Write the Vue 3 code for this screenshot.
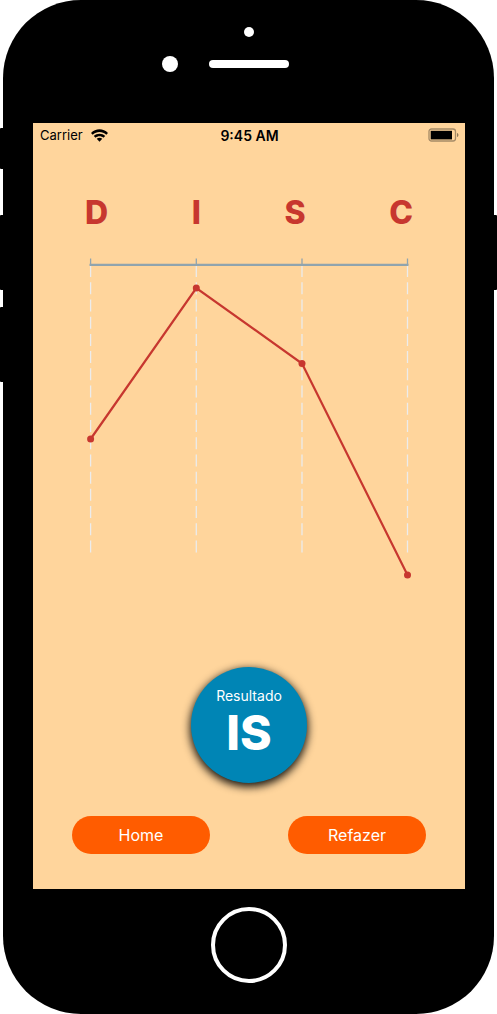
<script setup>
const title = 'IS'
const axisY = 15
const plotBottom = 303

const factors = [
  { letter: 'D', x: 57.6, y: 189 },
  { letter: 'I', x: 163.3, y: 38 },
  { letter: 'S', x: 269, y: 113.5 },
  { letter: 'C', x: 374.5, y: 325 },
]

const line = factors.map((f) => `${f.x},${f.y}`).join(' ')
</script>

<template>
  <div class="phone">
    <span class="side mute"></span>
    <span class="side volume-up"></span>
    <span class="side volume-down"></span>
    <span class="side power"></span>

    <div class="bezel">
      <span class="sensor"></span>
      <div class="ear-row">
        <span class="camera"></span>
        <span class="speaker"></span>
      </div>
    </div>

    <main class="screen">
      <header class="status">
        <div class="carrier">
          <span>Carrier</span>
          <svg class="wifi" viewBox="0 0 16 12" aria-hidden="true">
            <path d="M0 3.6C4.4-0.9 11.6-0.9 16 3.6L14.4 5.3C10.7 1.9 5.3 1.9 1.6 5.3Z" />
            <path d="M2.6 6.5C5.6 3.5 10.4 3.5 13.4 6.5L11.7 8.1C9.6 6.2 6.4 6.2 4.3 8.1Z" />
            <path d="M5.4 9.1C6.9 7.8 9.1 7.8 10.6 9.1L8 11.8Z" />
          </svg>
        </div>
        <time class="time">9:45 AM</time>
        <svg class="battery" viewBox="0 0 31 14" aria-hidden="true">
          <rect x="1" y="1" width="26.5" height="12" rx="2.5" class="shell" />
          <rect x="2.7" y="2.8" width="21.3" height="8.6" />
          <path d="M29 5C30.9 5.3 30.9 8.7 29 9Z" class="cap" />
        </svg>
      </header>

      <div class="letters">
        <span v-for="f in factors" :key="f.letter">{{ f.letter }}</span>
      </div>

      <svg class="chart" viewBox="0 0 432 340" role="img" aria-label="DISC">
        <line
          v-for="f in factors"
          :key="'g' + f.letter"
          class="grid"
          :x1="f.x"
          :x2="f.x"
          :y1="axisY"
          :y2="plotBottom"
        />
        <line
          v-for="f in factors"
          :key="'t' + f.letter"
          class="tick"
          :x1="f.x"
          :x2="f.x"
          y1="8.5"
          :y2="axisY"
        />
        <line class="axis" x1="56.5" x2="375.5" :y1="axisY - 0.2" :y2="axisY - 0.2" />
        <polyline class="line" :points="line" />
        <circle v-for="f in factors" :key="'p' + f.letter" class="point" :cx="f.x" :cy="f.y" r="3.5" />
      </svg>

      <section class="result">
        <span class="caption">Resultado</span>
        <strong class="profile">{{ title }}</strong>
      </section>

      <nav class="actions">
        <button type="button">Home</button>
        <button type="button">Refazer</button>
      </nav>
    </main>

    <div class="chin">
      <button type="button" class="home" aria-label="Home"></button>
    </div>
  </div>
</template>

<style>
body {
  margin: 0;
  background: #fff;
}
</style>

<style scoped>
.phone {
  position: relative;
  box-sizing: border-box;
  display: flex;
  flex-direction: column;
  min-height: 100vh;
  margin: 0 3px;
  padding: 0 29px 0 30px;
  border-radius: 78px;
  background: #000;
  font-family: Inter, "Liberation Sans", sans-serif;
}

.side {
  position: absolute;
  left: -3px;
  width: 6px;
  height: 75px;
  border-radius: 1px;
  background: #000;
}

.mute {
  top: 128px;
  height: 41px;
}

.volume-up {
  top: 215px;
}

.volume-down {
  top: 307px;
}

.power {
  top: 215px;
  right: -3px;
  left: auto;
}

.bezel {
  box-sizing: border-box;
  display: flex;
  flex-direction: column;
  align-items: center;
  gap: 19px;
  height: 123px;
  padding-top: 27px;
}

.sensor {
  width: 10px;
  height: 10px;
  border-radius: 50%;
  background: #fff;
}

.ear-row {
  display: grid;
  grid-template-columns: 1fr 80px 1fr;
  align-items: center;
  gap: 31px;
  width: 100%;
}

.camera {
  justify-self: end;
  width: 16px;
  height: 16px;
  border-radius: 50%;
  background: #fff;
}

.speaker {
  height: 8px;
  border-radius: 4px;
  background: #fff;
}

.screen {
  display: flex;
  flex: 1;
  flex-direction: column;
  background: #ffd59c;
}

.status {
  display: grid;
  grid-template-columns: 1fr auto 1fr;
  align-items: center;
  height: 24px;
  padding: 0 6px 0 7px;
  font-size: 13px;
  color: #000;
}

.carrier {
  display: flex;
  align-items: center;
  gap: 8px;
}

.wifi {
  width: 17px;
  height: 13px;
}

.time {
  font-size: 14px;
  font-weight: 600;
}

.battery {
  justify-self: end;
  width: 31px;
  height: 14px;
}

.shell {
  fill: none;
  stroke: #a58a66;
  stroke-width: 1.3;
}

.cap {
  fill: #8f7858;
}

.letters {
  display: flex;
  justify-content: space-between;
  margin-top: 46px;
  padding: 0 52px;
  font-size: 32px;
  font-weight: 800;
  line-height: 40px;
  color: #c7372f;
}

.chart {
  display: block;
  width: 100%;
  margin-top: 17px;
}

.grid {
  stroke: #ececec;
  stroke-width: 1.3;
  stroke-dasharray: 12 5.22;
}

.tick {
  stroke: #90a4ae;
  stroke-width: 1.3;
}

.axis {
  stroke: #90a4ae;
  stroke-width: 2.2;
}

.line {
  fill: none;
  stroke: #c7372f;
  stroke-width: 2.2;
}

.point {
  fill: #c7372f;
}

.result {
  box-sizing: border-box;
  display: flex;
  flex-direction: column;
  align-items: center;
  align-self: center;
  width: 116px;
  height: 116px;
  margin-top: 77px;
  padding-top: 20px;
  border-radius: 50%;
  background: #0085b5;
  box-shadow: 0 3px 9px 1px rgba(0, 0, 0, 0.9);
  color: #fff;
}

.caption {
  font-size: 14px;
  line-height: 18px;
}

.profile {
  font-size: 48px;
  font-weight: 800;
  line-height: 56px;
}

.actions {
  display: flex;
  justify-content: space-around;
  margin-top: 33px;
}

.actions button {
  width: 32%;
  height: 38px;
  padding: 0;
  border: 0;
  border-radius: 19px;
  background: #ff5c00;
  font: inherit;
  font-size: 16px;
  color: #fff;
}

.chin {
  display: flex;
  align-items: flex-start;
  justify-content: center;
  box-sizing: border-box;
  height: 125px;
  padding: 18px 1px 0 0;
}

.home {
  width: 76px;
  height: 76px;
  padding: 0;
  border: 4px solid #fff;
  border-radius: 50%;
  background: #000;
}
</style>
